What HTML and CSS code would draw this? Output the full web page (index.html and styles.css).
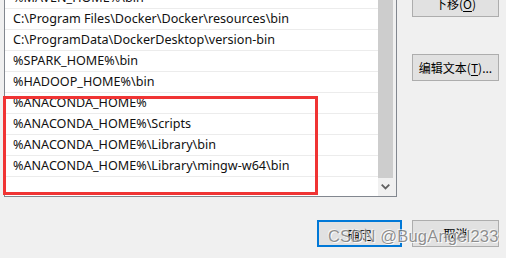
FILE: index.html
```html
<!DOCTYPE html>
<html lang="zh-CN">
<head>
    <meta charset="UTF-8">
    <title>编辑环境变量</title>
    <link rel="stylesheet" href="styles.css">
</head>
<body>
    <div class="dialog">
        <div class="main">
            <div class="listbox">
                <ul class="path-list">
                    <li>%MAVEN_HOME%\bin</li>
                    <li>C:\Program Files\Docker\Docker\resources\bin</li>
                    <li>C:\ProgramData\DockerDesktop\version-bin</li>
                    <li>%SPARK_HOME%\bin</li>
                    <li>%HADOOP_HOME%\bin</li>
                    <li>%ANACONDA_HOME%</li>
                    <li>%ANACONDA_HOME%\Scripts</li>
                    <li>%ANACONDA_HOME%\Library\bin</li>
                    <li>%ANACONDA_HOME%\Library\mingw-w64\bin</li>
                </ul>
                <div class="scrollbar">
                    <div class="thumb"></div>
                    <div class="arrow">
                        <svg width="9" height="6" viewBox="0 0 9 6"><path d="M0.7 0.7 L4.5 4.5 L8.3 0.7" fill="none" stroke="#606060" stroke-width="1.8"/></svg>
                    </div>
                </div>
                <div class="highlight"></div>
            </div>

            <div class="side-buttons">
                <button class="btn btn-move">下移(<u>O</u>)</button>
                <button class="btn btn-edit">编辑文本(<u>T</u>)...</button>
            </div>
        </div>

        <div class="footer">
            <button class="btn btn-ok">确定</button>
            <button class="btn">取消</button>
        </div>

        <div class="watermark">CSDN @BugAngel233</div>
    </div>
</body>
</html>
```

FILE: styles.css
```css
* {
    margin: 0;
    padding: 0;
    box-sizing: border-box;
}

body {
    background: #f0f0f0;
    font-family: 'Noto Sans', 'Noto Sans CJK SC', sans-serif;
    width: 506px;
    height: 258px;
    overflow: hidden;
}

.dialog {
    position: relative;
    height: 258px;
}

.main {
    display: flex;
    align-items: flex-start;
    gap: 15px;
}

.listbox {
    position: relative;
    display: flex;
    width: 393px;
    height: 210px;
    margin-top: -13px;
    margin-left: 4px;
    background: #fff;
    border: 1px solid #82878f;
}

.path-list {
    list-style: none;
    width: 373px;
}

.path-list li {
    height: 21px;
    line-height: 20px;
    padding-left: 8px;
    font-size: 12.6px;
    color: #111;
    border-bottom: 1px solid #ececec;
    white-space: nowrap;
}

.scrollbar {
    width: 18px;
    display: flex;
    flex-direction: column;
    background: #f0f0f0;
}

.thumb {
    width: 15px;
    height: 190px;
    background: #cdcdcd;
}

.arrow {
    flex: 1;
    display: flex;
    align-items: center;
    justify-content: center;
    padding-right: 3px;
}

.highlight {
    position: absolute;
    left: -2px;
    top: 108px;
    width: 315px;
    height: 99px;
    border: 3px solid #f03434;
}

.side-buttons {
    display: flex;
    flex-direction: column;
    gap: 37px;
    margin-top: -10px;
}

.btn {
    width: 87px;
    height: 27px;
    background: #e1e1e1;
    border: 1px solid #adadad;
    font-family: 'Noto Sans CJK SC', sans-serif;
    font-size: 12px;
    color: #000;
    line-height: 25px;
}

.btn u {
    text-decoration-thickness: 1px;
    text-underline-offset: 2px;
}

.footer {
    display: flex;
    justify-content: flex-end;
    gap: 10px;
    margin-top: 23px;
    padding-right: 7px;
}

.btn-ok {
    width: 85px;
    border: 2px solid #0078d7;
}

.watermark {
    position: absolute;
    left: 328px;
    top: 227px;
    font-family: 'Liberation Sans', sans-serif;
    font-size: 16.5px;
    color: rgba(110, 110, 110, 0.75);
    text-shadow: 1px 1px 0 rgba(255, 255, 255, 0.9), -1px -1px 0 rgba(255, 255, 255, 0.6);
    letter-spacing: 0.2px;
    white-space: nowrap;
}
```
